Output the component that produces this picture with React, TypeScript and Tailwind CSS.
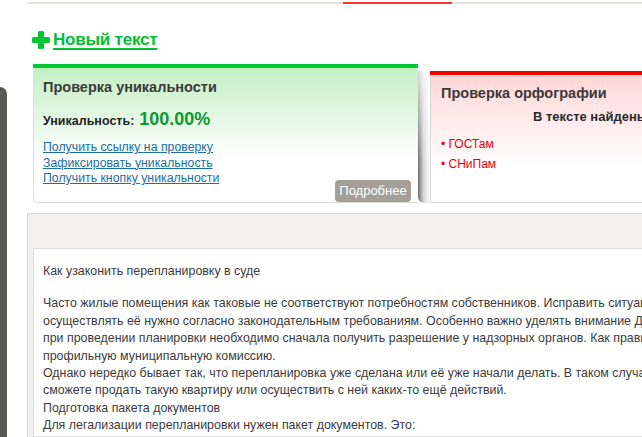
import React from 'react';

const body = [
  'при проведении планировки необходимо сначала получить разрешение у надзорных органов. Как правило, для этого нужно обратиться в',
  'профильную муниципальную комиссию.',
  'Однако нередко бывает так, что перепланировка уже сделана или её уже начали делать. В таком случае без узаконивания вы не',
  'сможете продать такую квартиру или осуществить с ней каких-то ещё действий.',
  'Подготовка пакета документов',
  'Для легализации перепланировки нужен пакет документов. Это:',
];

function Plus() {
  return (
    <svg width="18" height="18" viewBox="0 0 18 18" className="shrink-0">
      <rect x="6" y="0" width="6" height="18" rx="1.5" fill="#00c832" />
      <rect x="0" y="6" width="18" height="6" rx="1.5" fill="#00c832" />
    </svg>
  );
}

export default function App() {
  return (
    <div className="w-[642px] h-[437px] overflow-hidden bg-white flex font-['Liberation_Sans',Arial,sans-serif]">
      {/* тёмная боковая полоска */}
      <div className="w-[7px] shrink-0 mt-[87px] bg-[#585753] rounded-tr-[7px]" />

      <div className="ml-[20px] flex-1 min-w-0 flex flex-col">
        {/* верхняя линия с красным сегментом */}
        <div className="mt-[2px] h-[2px] bg-[#e4e2dc] flex shrink-0">
          <div className="ml-[316px] w-[109px] bg-[#f43a2c]" />
        </div>

        {/* Новый текст */}
        <div className="mt-[26px] ml-[5px] h-[19px] flex items-center gap-[3px] shrink-0">
          <Plus />
          <a className="text-[17px] leading-[19px] font-bold text-[#00c033] underline decoration-2 underline-offset-[3px] tracking-[-0.2px]">
            Новый текст
          </a>
        </div>

        {/* карточки */}
        <div className="mt-[15px] flex items-start shrink-0">
          {/* уникальность */}
          <div className="ml-[6px] w-[385px] shrink-0 flex flex-col">
            <div className="h-[4px] bg-[#00c832]" />
            <div className="h-[135px] border-l border-b border-[#dcdcdc] rounded-bl-[5px] bg-[linear-gradient(to_bottom,#c3efc3,#ffffff_68%)] pl-[9px] pr-[7px] pt-[10px] flex flex-col">
              <div className="text-[14.5px] leading-[18px] font-bold text-[#3a3a3a]">Проверка уникальности</div>
              <div className="mt-[10px] h-[22px] flex items-baseline gap-[5px]">
                <span className="text-[12.5px] font-bold text-[#222]">Уникальность:</span>
                <span className="text-[18px] font-bold text-[#0a9b2c]">100.00%</span>
              </div>
              <div className="mt-[12px] flex-1 flex justify-between">
                <div className="flex flex-col text-[12.3px] leading-[15.5px] text-[#1d6f9e]">
                  <a className="underline">Получить ссылку на проверку</a>
                  <a className="underline">Зафиксировать уникальность</a>
                  <a className="underline">Получить кнопку уникальности</a>
                </div>
                <div className="self-end w-[76px] h-[22px] rounded-[4px] bg-[#a3a09a] text-white text-[13px] flex items-center justify-center">
                  Подробнее
                </div>
              </div>
            </div>
          </div>

          {/* орфография */}
          <div className="mt-[7px] flex-1 flex">
            <div className="w-[12px] h-[132px] shrink-0 rounded-bl-[6px] bg-[linear-gradient(to_bottom,rgba(255,255,255,0.75),rgba(255,255,255,0)_70%),linear-gradient(to_right,#6f6f6f,#d4d4d4_45%,#ffffff)]" />
            <div className="flex-1 min-w-0 flex flex-col">
              <div className="h-[4px] bg-[#f00000]" />
              <div className="h-[128px] border-l border-b border-[#d6d6d6] bg-[linear-gradient(to_bottom,#ffd6d6,#ffffff_72%)] pl-[10px] pt-[9px] whitespace-nowrap">
                <div className="text-[14.5px] leading-[18px] font-bold text-[#3a3a3a]">Проверка орфографии</div>
                <div className="mt-[6px] ml-[92px] text-[13px] leading-[18px] font-bold text-[#2a2a2a]">В тексте найдены ошибки:</div>
                <div className="mt-[8px] flex flex-col text-[12px] leading-[20px] text-[#e8000e]">
                  <span>• ГОСТам</span>
                  <span>• СНиПам</span>
                </div>
              </div>
            </div>
          </div>
        </div>

        {/* поле текста */}
        <div className="mt-[10px] flex-1 border-t border-l border-[#dcdcdc] bg-[#f1f0ee] pl-[5px] pt-[34px] flex">
          <div className="flex-1 border border-[#dedede] bg-white pl-[9px] pt-[14px] text-[12.4px] leading-[17.4px] text-[#3b3b3b] whitespace-nowrap">
            <div>Как узаконить перепланировку в суде</div>
            <div className="h-[15px]" />
            <div>Часто жилые помещения как таковые не соответствуют потребностям собственников. Исправить ситуацию поможет перепланировка, однако</div>
            <div>
              осуществлять её нужно согласно законодательным требованиям. Особенно важно уделять внимание{' '}
              <span className="underline decoration-dotted decoration-[#e00000]">Дизайн-проекту</span>
            </div>
            {body.map((line, i) => (
              <div key={i}>{line}</div>
            ))}
          </div>
        </div>
      </div>
    </div>
  );
}
